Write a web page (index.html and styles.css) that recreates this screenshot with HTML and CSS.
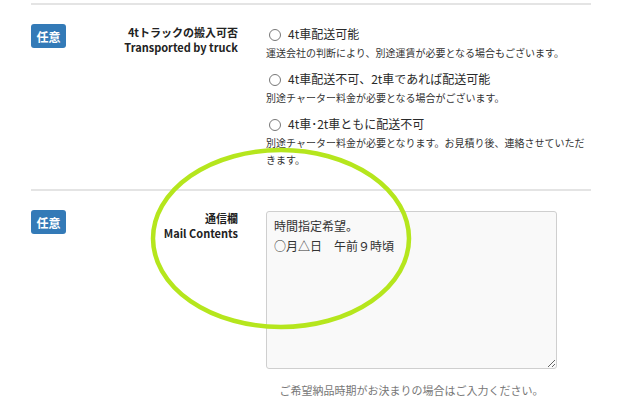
FILE: index.html
```html
<!DOCTYPE html>
<html lang="ja">
<head>
<meta charset="utf-8">
<link rel="stylesheet" href="styles.css">
</head>
<body>
<div class="form">
  <div class="row">
    <span class="badge">任意</span>
    <div class="label">
      <div>4tトラックの搬入可否</div>
      <div>Transported by truck</div>
    </div>
    <div class="content">
      <div class="option">
        <div class="radio-line"><span class="radio"></span><span>4t車配送可能</span></div>
        <p class="desc">運送会社の判断により、別途運賃が必要となる場合もございます。</p>
      </div>
      <div class="option">
        <div class="radio-line"><span class="radio"></span><span>4t車配送不可、2t車であれば配送可能</span></div>
        <p class="desc">別途チャーター料金が必要となる場合がございます。</p>
      </div>
      <div class="option">
        <div class="radio-line"><span class="radio"></span><span>4t車･2t車ともに配送不可</span></div>
        <p class="desc">別途チャーター料金が必要となります。お見積り後、連絡させていただきます。</p>
      </div>
    </div>
  </div>
  <div class="row">
    <span class="badge">任意</span>
    <div class="label">
      <div>通信欄</div>
      <div>Mail Contents</div>
    </div>
    <div class="content">
      <div class="field">
        <textarea class="memo">時間指定希望。
○月△日　午前９時頃</textarea>
        <p class="help">ご希望納品時期がお決まりの場合はご入力ください。</p>
      </div>
    </div>
  </div>
</div>
<svg class="circle-mark" width="632" height="404" viewBox="0 0 632 404">
  <ellipse cx="281" cy="238.5" rx="128" ry="88.5" fill="none" stroke="#b5e61d" stroke-width="4.5"/>
</svg>
</body>
</html>
```
FILE: styles.css
```css
html, body {
  margin: 0;
  padding: 0;
  background: #fff;
}
body {
  font-family: "Noto Sans CJK JP", "Noto Sans", sans-serif;
  color: #333;
  width: 632px;
  height: 404px;
  overflow: hidden;
  position: relative;
}
.form {
  padding-top: 3px;
  margin-left: 31px;
  width: 560px;
}
.row {
  display: grid;
  grid-template-columns: 35px 172px 1fr;
  align-items: start;
  border-top: 2px solid #e4e4e4;
  padding: 19px 0 21px;
}
.badge {
  display: flex;
  align-items: center;
  justify-content: center;
  height: 24px;
  background: #337ab7;
  color: #fff;
  font-size: 12px;
  font-weight: bold;
  border-radius: 3px;
}
.label {
  text-align: right;
  font-size: 11px;
  line-height: 15px;
  font-weight: bold;
  color: #222;
  padding-top: 1px;
}
.content {
  margin-left: 28px;
}
.option {
  margin-bottom: 8px;
}
.option:last-child {
  margin-bottom: 0;
}
.radio-line {
  display: flex;
  align-items: center;
  gap: 7px;
  font-size: 12px;
  line-height: 20px;
  color: #2a2a2a;
}
.radio {
  width: 10px;
  height: 10px;
  border: 1px solid #777;
  border-radius: 50%;
  margin-left: 3px;
  margin-top: 2px;
  flex: none;
}
.desc {
  margin: 0;
  font-size: 10px;
  line-height: 17px;
  color: #333;
}
.field {
  width: 291px;
  margin-top: 1px;
}
.memo {
  display: block;
  box-sizing: border-box;
  width: 291px;
  height: 158px;
  margin: 0;
  padding: 4px 7px;
  background: #f9f9f9;
  border: 1px solid #cfcfcf;
  border-radius: 3px;
  font-family: "Noto Sans CJK JP", "Noto Sans", sans-serif;
  font-size: 12px;
  line-height: 19.5px;
  color: #333;
  resize: both;
}
.help {
  margin: 13px 0 0;
  text-align: center;
  font-size: 11px;
  line-height: 16px;
  color: #777;
  white-space: nowrap;
}
.circle-mark {
  position: absolute;
  left: 0;
  top: 0;
  pointer-events: none;
}
```
